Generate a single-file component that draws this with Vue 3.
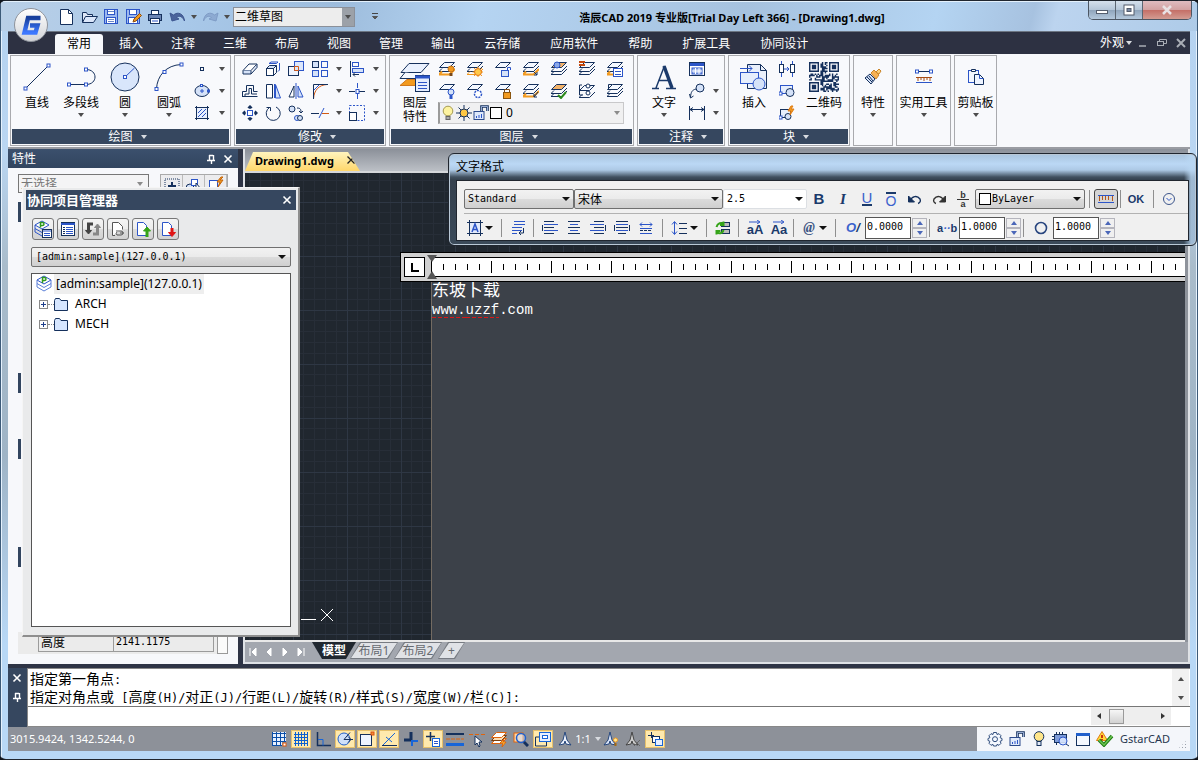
<script setup>
import { h } from 'vue'

const N = '#15305c'
const B = '#2c55c8'
const L = '#d5e2f8'
const O = '#f29a1f'

const p = (d, s = N, f = 'none', w = 1) => `<path d="${d}" stroke="${s}" fill="${f}" stroke-width="${w}"/>`
const r = (x, y, w, hh, s = N, f = 'none') => `<rect x="${x}" y="${y}" width="${w}" height="${hh}" stroke="${s}" fill="${f}"/>`
const c = (x, y, rad, s = N, f = 'none', w = 1) => `<circle cx="${x}" cy="${y}" r="${rad}" stroke="${s}" fill="${f}" stroke-width="${w}"/>`
const sheet = (y, f = '#f4f8ff', x = 0) => p(`M${x + 5.5} ${y}h10l-5 5h-10z`, N, f)
const edge = (y, s = N, w = 1, x = 0) => p(`M${x + 3} ${y}l-3 3h10.5l5.5-5.5`, s, 'none', w)
const stack = (f, e2 = N, w2 = 1) => sheet(1.5, f) + edge(7.5) + edge(10.5, e2, w2)
const node = (x, y) => r(x - 1.5, y - 1.5, 3, 3, B, '#fff')
const hl = (x1, x2, ys, s = N) => ys.map((y) => p(`M${x1} ${y}H${x2}`, s)).join('')

const bits = []
for (let y = 0; y < 21; y++) {
  for (let x = 0; x < 21; x++) {
    const inF = (a, b) => x >= a && x < a + 7 && y >= b && y < b + 7
    const near = (x < 8 && y < 8) || (x > 12 && y < 8) || (x < 8 && y > 12)
    let on = false
    for (const [a, b] of [[0, 0], [14, 0], [0, 14]]) {
      if (inF(a, b)) {
        const m = Math.max(Math.abs(x - a - 3), Math.abs(y - b - 3))
        on = m !== 2
      }
    }
    if (!near) on = (x * x * 7 + y * 13 + x * y * 5 + ((x * y) % 7) * 3) % 9 < 5
    if (on) bits.push(`M${x} ${y}h1.02v1.02h-1.02z`)
  }
}

const ic = {
  logo: [36, 36, `<defs><linearGradient id="lg" x2="0" y2="1"><stop stop-color="#fff"/><stop offset="1" stop-color="#d2d4d8"/></linearGradient><linearGradient id="gg" x2="0" y2="1"><stop stop-color="#173f9c"/><stop offset="1" stop-color="#3d78ff"/></linearGradient></defs><circle cx="18" cy="18" r="16.5" fill="url(#lg)" stroke="#8d929b"/>` + p('M27.500 11H15L11.500 25.500h11l2-7H17', 'url(#gg)', 'none', 4.500)],
  new: [16, 16, p('M1.5.5h8l4 4v11h-12z', N, '#fff') + p('M9.500.5v4h4', N)],
  open: [17, 16, p('M1.500 13.500v-10h4l1 2h5v2', N, '#dfe8f7') + p('M1.500 13.500l3-6h12l-4 6z', N, '#dbe7fb')],
  save: [16, 16, r(1.5, 0.5, 13, 14, B, '#9db8ee') + r(4.5, 0.5, 7, 5, B, '#fff') + r(3.5, 8.500, 9, 6, B, '#fff') + hl(5, 11, [2.5, 10.5, 12.500], '#6b87c8')],
  saveas: [17, 16, r(1.5, 0.5, 13, 14, B, '#9db8ee') + r(4.5, 0.5, 7, 5, B, '#fff') + r(3.5, 8.500, 9, 6, B, '#fff') + p('M8 13l1-3 5.500-5.500 2 2L11 12z', '#8b4d13', O)],
  print: [16, 16, r(4.5, 1.5, 7, 4, N, '#fff') + r(1.5, 5.5, 13, 6, N, '#6c86b4') + r(3.5, 9.5, 9, 5, N, '#fff') + hl(5, 11, [12], B)],
  undo: [17, 14, p('M1 3l2 8 7-2-2.500-1.500c3-2.500 6-1 8 3.500C15 4 9 1 4.500 5z', '#3d5690', '#4a639c')],
  redo: [17, 14, p('M16 3l-2 8-7-2 2.500-1.500c-3-2.500-6-1-8 3.500C2 4 8 1 12.500 5z', '#7f9cc6', '#8daad2')],
  line: [30, 30, p('M3.5 26.500L26.500 3.500') + node(3.5, 26.500) + node(26.500, 3.500)],
  pline: [32, 30, p('M4 22.500h17c12 0 12-15 0-15', N) + node(4, 22.500) + node(21, 22.500) + node(21, 7.500)],
  circle: [30, 30, c(15, 15, 14, N, '#d9e6fb') + p('M15 15L24.500 6', B) + node(15, 15)],
  arc: [30, 30, p('M2.500 27C3 14 12 3 27.500 2.500') + node(2.500, 27) + node(10.500, 10) + node(27.500, 2.500)],
  point: [16, 16, r(6.5, 6.5, 3, 3)],
  ellipse: [16, 16, `<ellipse cx="8" cy="8" rx="7" ry="5.500" stroke="${N}" fill="${L}"/>` + p('M8 6v4M6 8h4', B) + r(6.500, 1.500, 2, 2, B, '#fff') + r(13.500, 7, 2, 2, B, '#fff')],
  hatch: [16, 16, r(2.5, 2.500, 11, 11, N, '#e9f0fd') + p('M2.500 1v14M13.500 1v14M1 2.500h14M1 13.500h14') + p('M4 8l4-4M4 12l8-8M8 12l4-4', B)],
  erase: [16, 16, p('M1 9.500L7 3h8l-6 6.500z', N, '#fff') + p('M1 9.500V13h8V9.500M9 13l6-6.500V3', N, L)],
  copy3: [16, 16, r(1.500, 7.500, 7, 7, N, '#fff') + p('M1.500 7.500l3-3h7l-3 3z', N, L) + p('M8.500 14.500l3-3v-7', N) + p('M4 2.500l2-1.500h7l-1.500 1.500zM14.500 2v7l-1.500 1.500', B)],
  offs: [16, 16, r(0.5, 5.500, 10, 9, N, '#eef3fd') + r(6.500, 0.5, 9, 9, B, '#dbe6fc') + p('M6.500 9.500v-4h4v4z', '#d25a14')],
  array: [16, 16, r(0.5, 0.5, 6, 6, N, L) + r(9.5, 0.5, 6, 6, B) + r(0.5, 9.5, 6, 6, B, L) + r(9.5, 9.5, 6, 6, B)],
  align: [16, 16, p('M1.500 0v16') + r(3.500, 1.500, 6, 4, B) + r(3.500, 7.500, 11, 4, B, L) + p('M10 13.500H4m2-2l-2 2 2 2')],
  outset: [16, 16, p('M.5 13.500v-5h4v-6h7v6h4M3 13.500v-2.500h4V5.500h2.500V11H15M0 13.500h15.500')],
  mirror: [16, 16, p('M1.500 15V1.500h6V15z', N, '#fff') + p('M9.500 1v14', B) + p('M10.500 1.500L15.500 15h-5z', B, L)],
  mirror2: [16, 16, p('M6 3v11H1z', N, '#fff') + p('M8 0v16', B, 'none', 1) + p('M10 3v11h5z', B, L)],
  fillet: [16, 16, p('M1.500 16C2 7 7 2 15 1.500', '#d25a14') + p('M1.500 16V1.500H16', N) + p('M2 7l5-5', B)],
  brk: [16, 16, p('M0 8.500h6m4 0h6') + p('M8.500 0v5m0 6v5', B) + r(7, 6.500, 3, 4, B, '#fff')],
  move: [16, 16, r(5.500, 5.500, 5, 5, B, '#fff') + p('M8 4V1m-2 2l2-2 2 2M8 12v3m-2-2l2 2 2-2M4 8H1m2-2L1 8l2 2M12 8h3m-2-2l2 2-2 2', N, 'none', 1.5)],
  rotate: [16, 16, p('M4.500 2.500A7 7 0 1 0 11 2', N) + p('M1.500 2.500h4V6', N)],
  scalec: [16, 16, c(4, 4, 3, N, L) + c(9, 13, 2.500, B, L) + c(12, 13, 2.500, N, L) + p('M9 3c4 0 4 2 4 5m-2-2l2 2 2-2')],
  trim: [18, 16, p('M0 8.500h8') + p('M8 13l5-10', B) + p('M11 8.500h7', '#d25a14')],
  stretch: [16, 16, `<rect x=".5" y=".5" width="15" height="15" stroke="${B}" stroke-dasharray="2 1.500"/>` + r(0.5, 7.500, 7, 8, N, '#fff')],
  layers: [32, 32, p('M10 2.500h20l-8 9H2z', N, '#eaf1fe') + p('M6 11.500l-5 6h20l3-4', N, '#f4f8ff') + p('M8 18.500l-7 6h19v-6z', '#d2781c', O) + r(16.500, 14.500, 14, 16, N, '#e4edff') + p('M16 16h15', B, 'none', 3) + hl(19, 28, [21.500, 24.500, 27.500], B)],
  l1: [16, 16, stack('#f4f8ff', O, 2) + c(12, 8, 3, '#c2711a', O) + p('M12 12v3', '#7a4a1a', 'none', 3)],
  l2: [16, 16, stack('#f4f8ff', O) + c(11, 11, 3.500, '#e07010', '#ffc94a') + p('M11 5.500v2m0 7v1.500M5.500 11h2m7 0h1.500M7 7l1 1m6 6l1 1m0-8l-1 1m-6 6l-1 1', O)],
  l3: [16, 16, sheet(1.5) + p('M12.500 9V6.500h3V9', B) + r(6.500, 9.500, 7, 6, B, L)],
  l4: [16, 16, stack('#f4f8ff', O, 2) + p('M10 10l4 4m0-3v3h-3')],
  l5: [16, 16, stack('#f3b36a') + c(6, 4, 3, B, '#8ba8e6')],
  l6: [16, 16, stack('#f4f8ff') + p('M0 1h6M0 4h6', '#c4480c', 'none', 2)],
  l7: [16, 16, stack('#f4f8ff', O, 2) + r(6.500, 7.500, 9, 8, B, '#fff') + hl(8, 14, [10.500, 13.500], B)],
  l8: [16, 16, sheet(1.5) + c(12, 9, 3, B, L) + p('M12 12v4', B, 'none', 3)],
  l9: [16, 16, sheet(1.5) + `<circle cx="11" cy="11" r="3.500" stroke="${B}" fill="#fff" stroke-width="1.500" stroke-dasharray="2 1"/>`],
  l10: [16, 16, sheet(1.5) + p('M9.500 10V6.500h5V10', '#7a4a1a') + r(8.500, 9.500, 7, 6, '#8a5510', O)],
  l11: [16, 16, stack('#f4f8ff', O, 2) + p('M15 9l-4 5m0-3v3h3')],
  l12: [16, 16, stack('#f3b36a') + p('M7 12l3 3 5-6', '#2c8a1c', 'none', 2)],
  l13: [16, 16, sheet(2.5) + edge(11.500) + c(9, 3, 2, N, '#fff') + c(9, 10, 2, N, '#fff') + p('M3 2H.5v10H4')],
  l14: [16, 16, stack('#f4f8ff') + p('M5 1.500H1.500V5')],
  bulb: [14, 16, c(7, 6, 4.800, '#a59a51', '#fdf3a0') + r(5, 11.500, 4, 3, '#666', '#aaa')],
  sun: [16, 16, p('M8 0v16M0 8h16M2.500 2.500l11 11m0-11l-11 11') + c(8, 8, 4, N, '#ffc845')],
  lock: [16, 16, p('M8.500 7V1.500h6V6', N, 'none', 2.600) + p('M8.500 7V1.500h6V6', '#b9cdf2', 'none', 0.8) + r(1, 6.500, 10, 8, '#2c4a8c', '#dfe9fb') + p('M3.500 11v2m2.500-3v3m2.500-4v4', B)],
  bigA: [26, 26, p('M1 24.500h7M15 24.500h10M5 24L13 3l8 21M8 16.500h10', '#1b3a6b', 'none', 1.500) + p('M13 2l8 22', '#1b3a6b', 'none', 3.500)],
  table: [16, 14, r(0.5, 0.5, 15, 13, N, '#fff') + p('M1 2.500h14', B, 'none', 3) + r(3, 6, 10, 6, B, '#aabff0') + p('M3 9h10M6.500 6v6M10 6v6', '#fff')],
  leader: [16, 16, c(11, 5, 4, N, L) + p('M7 6C3 7 2 9 1.500 14m-1-3l1 4 3-2')],
  dim: [16, 16, p('M.5 1v14M15.500 1v14M1 4.500h14M4 2.500l-3 2 3 2M12 2.500l3 2-3 2')],
  insert: [30, 30, p('M8.500 10V2.500h13l6 6v18H8.500V20', N, '#eaf0fb') + p('M21.500 2.500v6h6') + r(1.500, 10.500, 18, 11, B, '#e6eefc') + c(20, 22, 6, B, L) + p('M1 6.500h12m-3-3l3 3-3 3', B)],
  b1: [16, 16, p('M2.500 0v16M13.500 0v16', B) + r(0.5, 3.500, 4, 8, N, '#fff') + r(11.500, 3.500, 4, 8, N, '#fff') + p('M5 8h5m-2-2l2 2-2 2', B)],
  b2: [16, 16, r(1.500, 2.500, 12, 8, B, '#e6eefc') + c(11, 9.500, 4, N, L) + node(1.500, 10.500)],
  b3: [16, 16, r(1.500, 4.500, 10, 8, N, '#e6eefc') + c(9, 11.500, 3, N, L) + node(1.500, 12.500) + p('M12 1l-3 5h3l-1 4 4-6h-3l2-3z', '#e07c12', O)],
  qr: [21, 21, `<path d="${bits.join('')}" fill="${N}" stroke="none"/>`],
  brush: [18, 18, p('M1 10l5-4 5 5-4 5z', N, L) + p('M3 9l5 5M5 8l4 5', N) + p('M7 5l3-3 5 5-3 4z', '#c9852a', '#f7b254') + p('M12 4l3-3 2 2-2 3z', '#c9852a', '#ffd27a')],
  util: [18, 16, p('M3 2.500h12', N) + node(2, 2.500) + node(16, 2.500) + p('M1 8.500h16', '#a84c12') + p('M3 8v4m3-4v3m3-3v4m3-4v3m3-3v4', '#a84c12') + p('M1 13.500h16', B)],
  paste: [16, 18, r(0.5, 2.500, 10, 12, B, '#f3f7ff') + p('M3.500 3.500v-2h4v2z', N, '#fff') + p('M6.500 6.500h5l4 4v6h-9z', N, '#eef4ff') + p('M11.500 6.500v4h4', B)],
  pin: [10, 10, p('M3.500 1v5m4-5v5M3 1.500h4M1 6.500h8M5.500 7v3', '#fff', 'none', 1.4)],
  x: [10, 10, p('M1.500 1.500l7 7m0-7l-7 7', '#fff', 'none', 1.6)],
  xd: [10, 10, p('M1.500 1.500l7 7m0-7l-7 7', '#222', 'none', 1.300)],
  q1: [16, 16, `<rect x="1" y="3" width="14" height="12" stroke="${N}" stroke-dasharray="1 1"/>` + p('M8 6v8M4 10h8', N, 'none', 2)],
  q2: [16, 16, c(4, 12, 4, N, L) + r(5.500, 3.500, 6, 6, B, '#fff') + p('M10 7v8l2-2 3 0z', N, '#fff')],
  q3: [16, 16, r(1.500, 4.500, 8, 9, B, '#fff') + p('M13 1l-4 5h3l-2 5 5-7h-3l3-3z', '#c4660d', O)],
  proj: [18, 18, p('M9 1l7 4-7 4-7-4z', B, '#fff') + p('M2 5v7l7 4 7-4V5M2 8.500l7 4 7-4', '#5b7fd8') + p('M7.500 8V2.500h2a1 1 0 0 1 0 3h-2', '#2f9a1c', 'none', 1.500)],
  proj2: [18, 18, p('M8 1l7 4-7 4-7-4z', B, '#fff') + p('M1 5v7l7 4M1 8.500l7 4', B) + p('M6.500 7.500V2.500h2a1 1 0 0 1 0 3h-2', '#2f9a1c', 'none', 1.500) + r(8.500, 9.500, 9, 8, N, '#fff') + p('M9 11h8M10 13.500h6M10 15.500h6', B)],
  list: [16, 16, r(1.500, 1.500, 13, 13, N, '#fff') + p('M1 3h14', B, 'none', 2) + hl(3, 5, [6.500, 8.500, 10.500, 12.500]) + hl(6, 13, [6.500, 8.500, 10.500, 12.500], B)],
  swap: [18, 16, p('M9 3H4.500v8', '#444', 'none', 3) + p('M1.500 9.500h6L4.500 13z', '#444', '#444') + p('M9 13h4.500V6', '#888', 'none', 3) + p('M10.500 6.500h6L13.500 3z', '#888', '#888')],
  docl: [16, 16, p('M2.500 14.500V1.500h6l4 4v3', '#555', '#fff') + p('M5 14.500H2.500M6 10h5a2 2 0 0 1 0 4H7a2 2 0 0 1 0-3m3 1h4', '#555')],
  docu: [16, 16, p('M2.500 1.500h6l3 3v10h-9z', B, '#fff') + p('M12 16V9', '#35a418', 'none', 3) + p('M8.500 10h7L12 6z', '#35a418', '#35a418')],
  docd: [16, 16, p('M2.500 1.500h6l3 3v10h-9z', B, '#fff') + p('M12 7v5', '#e01515', 'none', 3) + p('M8.500 11.500h7L12 15.500z', '#e01515', '#e01515')],
  folder: [14, 13, p('M.5 12.500v-10l1-2h4l1.500 2h6.500v10z', N, '#d6e6ff')],
  ucsx: [14, 14, p('M1 1l12 12M13 1L1 13', '#fff')],
  fA: [16, 16, r(2.500, 2.500, 11, 11, B, '#e2eafb') + p('M2.500 0v16M13.500 0v16M0 2.500h16M0 13.500h16') + p('M5 12l3-8 3 8M6 9.500h4', B, 'none', 1.5)],
  fP: [14, 16, hl(3, 14, [1.500, 4.500], B) + hl(1, 11, [7.500, 10.500], B) + hl(1, 6, [13.500], B) + p('M12.500 8v5H8m2-2l-2 2 2 2', N)],
  fL: [16, 16, p('M.5 5v6', N) + hl(2, 12, [1.500, 7.500]) + hl(2, 16, [4.500, 10.500], B) + hl(2, 12, [13.500])],
  fC: [14, 16, hl(1, 13, [1.500, 7.500, 13.500]) + hl(3, 11, [4.500, 10.500], B)],
  fR: [16, 16, p('M15.500 5v6', N) + hl(4, 14, [1.500, 7.500]) + hl(0, 14, [4.500, 10.500], B) + hl(4, 14, [13.500])],
  fJ: [16, 16, p('M.5 5v6M15.500 5v6', N) + hl(2, 14, [1.500, 7.500]) + hl(2, 14, [4.500, 10.500], B) + hl(4, 12, [13.500])],
  fD: [14, 16, p('M1 4.500h12M3 2.500l-2 2 2 2m8-4l2 2-2 2', B) + `<path d="M1 10.500h12" stroke="${N}" stroke-dasharray="3 1"/>` + hl(1, 13, [8.500, 13.500], B)],
  fS: [16, 16, p('M3.500 2v12M1 4.500l2.500-3L6 4.500m-5 7l2.500 3L6 11.500', B) + hl(8, 16, [3.500, 8.500, 13.500])],
  fF: [16, 16, r(6.500, 2.500, 8, 4, N, '#bbb') + r(6.500, 9.500, 8, 4, N, '#bbb') + p('M1.500 7c1-4 5-5 7-3m0-2.500v3.500H5M8.500 10c-1 4-5 4-7 2m0 2.500v-3.500h4', '#35a418', 'none', 2)],
  arrR: [12, 4, p('M0 2h10M8 0l3 2-3 2', B)],
  fU: [14, 14, p('M2 9c2-5 7-6 10-2 1 2 0 4-2 4.500', N, 'none', 1.400) + p('M.5 4v6h6z', N, N)],
  fX: [14, 14, p('M12 9C10 4 5 3 2 7c-1 2 0 4 2 4.500', '#333', 'none', 1.400) + p('M13.500 4v6h-6z', '#333', '#333')],
  ruler: [16, 10, p('M0 1.500h16', B) + p('M1.500 2v5m3-5v4m3-4v4m3-4v4m4-4v5', '#b4561a') + p('M0 8.500h16', B)],
  more: [14, 14, c(7, 7, 5.500, '#3c558b') + p('M4.500 6l2.500 2.500L9.500 6', B)],
  ring: [14, 14, c(7, 7, 5.500, '#29467f', 'none', 1.600)],
  s1: [16, 16, p('M1 1h14v10h-4v4H1z', 'none', '#e8f1ff') + p('M1.500 1v14M5.500 1v14M9.500 1v14M13.500 1v10M1 2.500h14M1 6.500h14M1 10.500h14M1 14.500h10', '#0b4ea8') + r(12, 12, 3, 3, '#e0590c', '#fff')],
  s2: [16, 16, p('M2.500 1v14M5.500 1v14M8.500 1v14M11.500 1v14M14.500 1v14M1 3.500h14M1 6.500h14M1 9.500h14M1 12.500h14', '#0b5fd0')],
  s3: [16, 16, p('M2.500 1v13.500H16', N, 'none', 1.500) + p('M3 8.500h5v6', '#1765d8')],
  s4: [16, 16, c(7, 8, 6, '#2160cc', '#cfe0fa') + p('M7 8.500h9M7 8.500l6-7m-2 4l3 3-3 3')],
  s5: [16, 16, r(1.500, 3.500, 11, 11, N, '#eef4ff') + r(12, 1, 3, 3, '#d8500c', '#f58a3a')],
  s6: [16, 16, p('M1 14.500h15', N) + p('M2 14L14 2', '#1765d8') + p('M5 6l6 5', '#1765d8')],
  s7: [16, 16, p('M8 1v8H1', N, 'none', 3) + p('M9 10h6M9 9v6', '#1765d8', 'none', 2)],
  s8: [16, 16, p('M1 5.500h9M5.500 1v9', N, 'none', 1.500) + r(7.500, 7.500, 7, 8, '#1765d8', '#fff') + hl(9, 13, [10.500, 12.500], B)],
  s9: [18, 16, p('M0 3h18', N, 'none', 2) + '<path d="M0 8h18" stroke="#e0640c" stroke-dasharray="4 1"/>' + p('M0 13.500h18', '#1765d8', 'none', 3)],
  s10: [16, 16, '<path d="M0 3.500h16" stroke="#e0640c" stroke-dasharray="4 2"/>' + p('M6 5v9l2-2 2 4 1-1-1-4h3z', N, '#fff')],
  s11: [16, 16, p('M5.500 7.500h10l-5 5h-10z', '#e0640c', '#fff') + p('M5.500 4.500h10l-5 5h-10z', '#7a3f10', '#ffdcb0') + p('M5.500 1.500h10l-5 5h-10z', '#e0640c', '#fff') + p('M13 8l-4 4h3l-1 4 4-5h-3z', '#e0640c', '#ffd23f')],
  s12: [16, 16, r(1, 2, 9, 9, '#e0640c', '#ffd5a5') + c(8, 7, 4.500, '#2160cc', '#cfe0fa88', 1.500) + p('M11 11l4 4', N, 'none', 3)],
  s13: [18, 16, r(5.500, 1.500, 11, 9, '#1765d8', '#e6f0ff') + r(8.500, 4.500, 5, 3, '#1765d8', '#fff') + p('M5 6H1.500v9h11v-4', N)],
  s14: [14, 16, p('M7 1L5 9l-4 5 5-1 1-3 1 3 5 1-4-5z', '#26477d', '#f0f5ff')],
  s15: [16, 16, p('M7 1L5 9l-4 5 5-1 1-3 1 3 5 1-4-5z', '#26477d', '#dbe6fa') + c(12.500, 9, 2, O, '#ffeb9a') + p('M12.500 12v3', '#a86a10', 'none', 2)],
  s16: [16, 16, p('M7 1L5 9l-4 5 5-1 1-3 1 3 5 1-4-5z', '#444', '#ccc') + p('M9 9l6 6m0-6l-6 6', '#666')],
  s17: [16, 16, p('M1 4.500h6M4.500 1v6', N) + r(5.500, 5.500, 7, 6, N, '#fff') + r(8.500, 8.500, 7, 6, '#1765d8', '#e6f0ff')],
  gear: [16, 16, p('M6.500 1.500h3l.5 2 2-.8 2 2-.9 2 1.900.8v2l-1.900.8.9 2-2 2-2-.9-.5 1.600h-3l-.5-1.600-2 .9-2-2 .9-2-1.900-.8v-2l1.900-.8-.9-2 2-2 2 .8z', '#2f4c7c', '#f4f8ff') + c(8, 8.200, 2.500, '#2f4c7c')],
  bulb2: [14, 16, c(7, 5.500, 4.800, N, '#ffe68a') + r(5, 10.500, 4, 4, N, '#dfe8f7')],
  chip: [18, 16, r(2.500, 3.500, 12, 8, N, '#7e9bd8') + p('M4.500 1v2m3-2v2m3-2v2M4.500 12v2M0 5.500h2M0 8.500h2', N) + c(11, 10, 4, B, '#dbe8ffdd') + p('M14 13l3 2', N)],
  win: [16, 16, r(1.500, 2.500, 13, 12, N, '#f4f8ff') + p('M1 3.500h14', '#2160cc', 'none', 3)],
  warn: [18, 16, p('M6 .5l5.500 9H.5z', '#e07c12', '#ffd83a') + p('M6 4v3m0 1v1', '#b00', 'none', 1.500) + p('M3 9l5 5 8-9', '#1f7d14', 'none', 3.500) + p('M3 9l5 5 8-9', '#6dc552', 'none', 1.500)],
  gm: [12, 12, r(0.5, 6.500, 11, 3, '#555e6e', '#fff')],
  gx: [12, 10, p('M2 1l8 8m0-8l-8 8', '#e9e1e3', 'none', 2.500)],
  gr: [12, 12, r(1, 1, 10, 10, '#525b6b', '#fff') + r(4, 4.500, 4, 3, '#525b6b', '#7a8aa6')],
  m1: [10, 10, p('M1 8h7', '#a9adb5', 'none', 1.500)],
  m2: [10, 10, r(0.5, 3.500, 6, 4, '#a9adb5') + p('M2.500 3V1.500h7v4H7', '#a9adb5')],
  m3: [10, 10, p('M1 1l8 8m0-8L1 9', '#a9adb5', 'none', 2)],
  cus: [10, 8, p('M2 .5h6', '#444') + p('M2.500 3.500h5L5 6z', '#555', '#555')],
  nf: [8, 8, p('M1 0v8', '#fff') + p('M7 0L3 4l4 4z', '#fff', '#fff')],
  np: [8, 8, p('M6 0L2 4l4 4z', '#fff', '#fff')],
  nn: [8, 8, p('M2 0l4 4-4 4z', '#fff', '#fff')],
  nl: [8, 8, p('M7 0v8', '#fff') + p('M1 0l4 4-4 4z', '#fff', '#fff')],
}

const Icon = (props) => {
  const [w, hh, inner] = ic[props.n]
  return h('svg', { width: props.w || w, height: props.w || hh, viewBox: `0 0 ${w} ${hh}`, fill: 'none', 'aria-hidden': 'true', style: { display: 'block', flex: 'none' }, innerHTML: inner })
}
Icon.props = ['n', 'w']

const quick = [['new', '新建'], ['open', '打开'], ['save', '保存'], ['saveas', '另存为'], ['print', '打印']]
const menus = ['常用', '插入', '注释', '三维', '布局', '视图', '管理', '输出', '云存储', '应用软件', '帮助', '扩展工具', '协同设计']
const draw = [['line', '直线', false], ['pline', '多段线', true], ['circle', '圆', true], ['arc', '圆弧', true]]
const modify = ['erase', 'copy3', 'offs', 'array', 0, 'align', 0, 'outset', 'mirror', 'mirror2', 'fillet', 0, 'brk', 0, 'move', 'rotate', 'scalec', 'trim', 0, 'stretch', 0]
const layerIcons = Array.from({ length: 14 }, (_, i) => 'l' + (i + 1))
const singles = [['brush', '特性', 'w40'], ['util', '实用工具', 'w55'], ['paste', '剪贴板', 'w43']]
const toolsPM = ['proj2', 'list', 'swap', 'docl', 'docu', 'docd']
const status = [['s1', 0], ['s2', 1], ['s3', 0], ['s4', 1], ['s5', 1], ['s6', 1], ['s7', 0], ['s8', 1], ['s9', 0], ['s10', 0], ['s11', 0], ['s12', 0], ['s13', 1], ['s14', 0]]
const tray = ['gear', 'lock', 'bulb2', 'chip', 'win', 'warn']
const spins = [['倾斜角度', '0.0000'], ['追踪', '1.0000'], ['宽度因子', '1.0000']]
const log = ['指定第一角点:', '指定对角点或 [高度(H)/对正(J)/行距(L)/旋转(R)/样式(S)/宽度(W)/栏(C)]:']
const runs = (t) => t.match(/[\x20-\x7e]+|[^\x20-\x7e]+/g).map((s) => ({ s, latin: /^[\x20-\x7e]/.test(s) }))
</script>

<template>
  <div class="app">
    <header class="title">
      <button class="logo" aria-label="应用菜单"><Icon n="logo" /></button>
      <div class="quick">
        <button v-for="q in quick" :key="q[0]" :aria-label="q[1]"><Icon :n="q[0]" /></button>
        <button aria-label="撤销"><Icon n="undo" /></button>
        <button class="dd" aria-label="撤销列表"><i class="tri"></i></button>
        <button aria-label="重做"><Icon n="redo" /></button>
        <button class="dd" aria-label="重做列表"><i class="tri"></i></button>
        <label class="space"><select aria-label="工作空间"><option>二维草图</option></select><span><i class="tri"></i></span></label>
        <button class="cus" aria-label="自定义"><Icon n="cus" /></button>
      </div>
      <h1>浩辰CAD 2019 专业版[Trial Day Left 366] - [Drawing1.dwg]</h1>
      <div class="winbtns">
        <button aria-label="最小化"><Icon n="gm" /></button>
        <button aria-label="还原"><Icon n="gr" /></button>
        <button class="close" aria-label="关闭"><Icon n="gx" /></button>
      </div>
    </header>

    <div class="client">
      <nav class="menu">
        <button v-for="(m, i) in menus" :key="m" :class="{ on: i === 0 }">{{ m }}</button>
        <div class="mdi">
          <button>外观<i class="tri lt"></i></button>
          <button v-for="m in ['m1', 'm2', 'm3']" :key="m" :aria-label="m"><Icon :n="m" /></button>
        </div>
      </nav>

      <section class="ribbon">
        <div class="panel w221">
          <div class="body">
            <button v-for="d in draw" :key="d[0]" class="big"><span class="pic"><Icon :n="d[0]" /></span>{{ d[1] }}<i v-if="d[2]" class="tri"></i></button>
            <div class="small pair">
              <template v-for="s in ['point', 'ellipse', 'hatch']" :key="s">
                <button :aria-label="s"><Icon :n="s" /></button><button aria-label="更多"><i class="tri"></i></button>
              </template>
            </div>
          </div>
          <footer>绘图<i class="tri lt"></i></footer>
        </div>
        <div class="panel w153">
          <div class="body">
            <div class="small mod">
              <button v-for="(s, i) in modify" :key="i" :aria-label="s || '更多'"><Icon v-if="s" :n="s" /><i v-else class="tri"></i></button>
            </div>
          </div>
          <footer>修改<i class="tri lt"></i></footer>
        </div>
        <div class="panel w245">
          <div class="body">
            <button class="big two"><span class="pic"><Icon n="layers" /></span><span class="wrap">图层 特性</span></button>
            <div class="layer">
              <div class="small lay">
                <button v-for="s in layerIcons" :key="s" :aria-label="s"><Icon :n="s" /></button>
              </div>
              <button class="laycombo">
                <Icon n="bulb" /><Icon n="sun" /><Icon n="lock" /><i class="sq"></i><span>0</span><i class="tri g"></i>
              </button>
            </div>
          </div>
          <footer>图层<i class="tri lt"></i></footer>
        </div>
        <div class="panel w88">
          <div class="body">
            <button class="big"><span class="pic"><Icon n="bigA" /></span>文字<i class="tri"></i></button>
            <div class="small ann">
              <button aria-label="表格"><Icon n="table" /></button><span></span>
              <button aria-label="引线"><Icon n="leader" /></button><button aria-label="更多"><i class="tri"></i></button>
              <button aria-label="标注"><Icon n="dim" /></button><button aria-label="更多"><i class="tri"></i></button>
            </div>
          </div>
          <footer>注释<i class="tri lt"></i></footer>
        </div>
        <div class="panel w122">
          <div class="body">
            <button class="big"><span class="pic"><Icon n="insert" /></span>插入</button>
            <div class="small one">
              <button v-for="s in ['b1', 'b2', 'b3']" :key="s" :aria-label="s"><Icon :n="s" /></button>
            </div>
            <button class="big"><span class="pic"><Icon n="qr" :w="30" /></span>二维码<i class="tri"></i></button>
          </div>
          <footer>块<i class="tri lt"></i></footer>
        </div>
        <div v-for="s in singles" :key="s[0]" class="panel solo" :class="s[2]">
          <button class="big"><span class="pic"><Icon :n="s[0]" /></span>{{ s[1] }}<i class="tri"></i></button>
        </div>
      </section>

      <main class="work">
        <aside class="props">
          <header>特性<span></span><button aria-label="固定"><Icon n="pin" /></button><button aria-label="关闭特性"><Icon n="x" /></button></header>
          <div class="sel">
            <label><select aria-label="选择" disabled><option>无选择</option></select><i class="tri g"></i></label>
            <div><button v-for="q in ['q1', 'q2', 'q3']" :key="q" :aria-label="q"><Icon :n="q" /></button></div>
          </div>
          <div class="sections">
            <div class="sec a"></div><div class="sec b"></div><div class="sec c"></div><div class="sec d"></div>
          </div>
          <div class="tail">
            <table><tbody><tr><th>高度</th><td>2141.1175</td></tr></tbody></table>
            <span class="thumb"></span>
          </div>
        </aside>

        <section class="doc">
          <div class="doctabs">
            <div class="doctab">Drawing1.dwg<button aria-label="关闭图纸"><Icon n="xd" /></button></div>
          </div>
          <div class="canvas">
            <div class="ucs"><Icon n="ucsx" /></div>
            <div class="mtext">
              <div class="rulerbar"><span class="tabstop"></span><span class="ruler"></span><i class="mk top"></i><i class="mk bot"></i></div>
              <div class="edit"><p>东坡卜载</p><p class="lat"><u>www.</u><u class="second">uzzf</u>.com</p></div>
            </div>
          </div>
          <div class="layouts">
            <button v-for="n in ['nf', 'np', 'nn', 'nl']" :key="n" class="nav" :aria-label="n"><Icon :n="n" /></button>
            <button class="sheet on"><span>模型</span></button>
            <button class="sheet"><span>布局1</span></button>
            <button class="sheet"><span>布局2</span></button>
            <button class="sheet plus"><span>+</span></button>
          </div>
        </section>
      </main>

      <section class="cmd">
        <div class="grip"><button aria-label="关闭命令行"><Icon n="x" /></button><button aria-label="固定命令行"><Icon n="pin" /></button></div>
        <div class="cmdmain">
          <div class="log">
            <div><p v-for="t in log" :key="t"><span v-for="(u, i) in runs(t)" :key="i" :class="{ latin: u.latin }">{{ u.s }}</span></p></div>
            <div class="vs"><i class="tri up"></i><i class="tri"></i></div>
          </div>
          <div class="entry"><input aria-label="命令"><div class="hs"><i class="tri le"></i><b></b><i class="tri ri"></i></div></div>
        </div>
      </section>

      <footer class="status">
        <span class="coord">3015.9424, 1342.5244, 0</span>
        <div class="toggles">
          <button v-for="s in status" :key="s[0]" :class="{ on: s[1] }" :aria-label="s[0]"><Icon :n="s[0]" /></button>
          <button class="ratio">1:1<i class="tri lt"></i></button>
          <button aria-label="注释可见性"><Icon n="s15" /></button>
          <button aria-label="自动缩放"><Icon n="s16" /></button>
          <button class="on" aria-label="循环选择"><Icon n="s17" /></button>
        </div>
        <div class="tray">
          <button v-for="t in tray" :key="t" :aria-label="t"><Icon :n="t" /></button>
          <span>GstarCAD</span>
          <i class="size"></i>
        </div>
      </footer>
    </div>

    <section class="pm">
      <header>协同项目管理器<button aria-label="关闭协同项目管理器"><Icon n="x" /></button></header>
      <div class="pmtools"><button v-for="t in toolsPM" :key="t" :aria-label="t"><Icon :n="t" /></button></div>
      <label class="combo"><select aria-label="项目"><option>[admin:sample](127.0.0.1)</option></select><i class="tri k"></i></label>
      <ul class="tree">
        <li class="root"><Icon n="proj" /><span>[admin:sample](127.0.0.1)</span></li>
        <li v-for="f in ['ARCH', 'MECH']" :key="f" class="kid"><button aria-label="展开"></button><i class="dots"></i><Icon n="folder" /><span>{{ f }}</span></li>
      </ul>
    </section>

    <section class="fmt">
      <header>文字格式</header>
      <div class="fbody">
        <div class="row one">
          <label class="combo c110"><select aria-label="样式"><option>Standard</option></select><i class="tri k"></i></label>
          <label class="combo c148 zh"><select aria-label="字体"><option>宋体</option></select><i class="tri k"></i></label>
          <label class="combo flat c84"><select aria-label="字高"><option>2.5</option></select><i class="tri k"></i></label>
          <button class="t bold">B</button><button class="t ital">I</button><button class="t und"><span>U</span></button><button class="t ov"><span>O</span></button>
          <button aria-label="撤销编辑"><Icon n="fU" /></button><button aria-label="重做编辑"><Icon n="fX" /></button>
          <button class="frac" aria-label="堆叠"><span>b</span><span>a</span></button>
          <label class="combo c110 layer-c"><i class="sq"></i><select aria-label="颜色"><option>ByLayer</option></select><i class="tri k"></i></label>
          <hr><button class="rtog" aria-label="标尺"><Icon n="ruler" /></button><hr>
          <button class="ok">OK</button><hr>
          <button class="mo" aria-label="选项"><Icon n="more" /></button>
        </div>
        <div class="row two">
          <button class="n" aria-label="分栏"><Icon n="fA" /></button><i class="tri k"></i><hr>
          <button class="p" aria-label="段落"><Icon n="fP" /></button><hr>
          <button v-for="f in ['fL', 'fC', 'fR', 'fJ', 'fD']" :key="f" :aria-label="f"><Icon :n="f" /></button><hr>
          <button aria-label="行距"><Icon n="fS" /></button><i class="tri k"></i><hr>
          <button class="p" aria-label="字段"><Icon n="fF" /></button><hr>
          <button class="case"><Icon n="arrR" />aA</button><button class="case"><Icon n="arrR" />Aa</button><hr>
          <button class="at">@</button><i class="tri k"></i><hr>
          <template v-for="(s, i) in spins" :key="i">
            <label class="spin" :class="'g' + i">
              <span v-if="i === 0"><em>O</em>/</span><span v-else-if="i === 1">a<em>··</em>b</span><Icon v-else n="ring" />
              <input :value="s[1]" :aria-label="s[0]">
            </label>
            <span class="ud"><button aria-label="增加"><i class="tri up"></i></button><button aria-label="减少"><i class="tri"></i></button></span>
            <hr v-if="i < 2">
          </template>
        </div>
      </div>
    </section>
  </div>
</template>

<style>
html, body, #app { height: 100%; }
body { margin: 0; background: #10151c; }
</style>

<style scoped>
* { box-sizing: border-box; }
button, input, select { font: inherit; color: inherit; background: none; border: 0; padding: 0; margin: 0; border-radius: 0; }
button { display: flex; align-items: center; justify-content: center; }
select { appearance: none; width: 100%; outline: 0; opacity: 1; }
p, h1, ul { margin: 0; padding: 0; list-style: none; }
.app { position: relative; height: 100%; display: flex; flex-direction: column; padding: 0 8px 8px; overflow: hidden; border: 1px solid #20262f; border-width: 1px 0; border-radius: 6px;
  font: 12px/16px "Noto Sans", "Noto Sans CJK SC", sans-serif; color: #000;
  background: linear-gradient(90deg, #3c5a78 0 1px, #e6f2fd 1px 2px, transparent 2px calc(100% - 2px), #e6f2fd calc(100% - 2px) calc(100% - 1px), #3c5a78 calc(100% - 1px)),
    linear-gradient(#b4d2f0, #bad6f2 20%, #a9bccb 35%, #9fb4c6 60%, #b8d8f6 85%); }
.tri { display: block; flex: none; width: 0; height: 0; border: 3px solid transparent; border-top: 4px solid #4d4d4d; border-bottom: 0; }
.tri.lt { border-top-color: #d8dbe0; }
.tri.g { border-top-color: #8b8b8b; }
.tri.k { border-width: 4px; border-bottom: 0; border-top-color: #111; }
.tri.up { border-top: 0; border-bottom: 4px solid #4d4d4d; }
.tri.le { border: 3px solid transparent; border-right: 4px solid #333; border-left: 0; }
.tri.ri { border: 3px solid transparent; border-left: 4px solid #333; border-right: 0; }
.sq { display: block; flex: none; width: 12px; height: 12px; border: 1px solid #000; background: #fff; }

.title { height: 30px; flex: none; display: flex; align-items: flex-start; margin: 0 -7px; padding: 0 0 0 55px;
  background: linear-gradient(105deg, #b9cfe6, #a9c9ea 15%, #9dbcdc 28%, #b5d4f2 40%, #a6c2df 62%, #b4d4f2 78%, #a7c2e0 86%, #bcd4ef 88%, #aecbe8 100%); box-shadow: inset 0 1px #e4f1fc; }
.logo { position: absolute; left: 13px; top: 6px; }
.quick { display: flex; align-items: center; height: 32px; width: 326px; flex: none; }
.quick button { width: 22px; height: 22px; flex: none; }
.quick .dd { width: 11px; }
.quick .cus { width: 14px; margin-left: 13px; }
.space { display: flex; width: 122px; height: 20px; flex: none; margin-left: 1px; background: #ededed; border: 1px solid #8b9099; font-size: 12px; padding-left: 1px; }
.space span { width: 12px; background: #9ca1a8; display: flex; align-items: center; justify-content: center; flex: none; }
.title h1 { flex: 1; text-align: center; font-size: 11px; font-weight: 700; line-height: 34px; white-space: nowrap; }
.winbtns { display: flex; width: 104px; height: 19px; flex: none; margin-right: 5px; margin-left: 6px; border: 1px solid #4c5663; border-top: 0; border-radius: 0 0 5px 5px; overflow: hidden; }
.winbtns button { width: 27px; flex: 1 1 27px; border-right: 1px solid #5c6672; background: linear-gradient(#d5e0ec, #b5c6d8 48%, #8fa4bb 50%, #b4c8dc); }
.winbtns .close { flex: 1 1 48px; border: 0; background: linear-gradient(#dfbcc0, #d3a2a2 48%, #c46e66 50%, #d39c92); }

.client { flex: 1; min-height: 0; display: flex; flex-direction: column; background: #2e3445; border-top: 1px solid #6d7683; }
.menu { height: 22px; flex: none; display: flex; align-items: flex-end; padding-left: 47px; color: #fff; background: #2d3142; }
.menu > button { height: 20px; padding: 0 14px; line-height: 18px; }
.menu > button:nth-child(n+9) { padding: 0 15px; }
.menu > button.on { background: #f7f8fb; color: #000; padding: 0 12px; margin-right: 2px; border-radius: 3px 3px 0 0; }
.mdi { margin-left: auto; display: flex; align-items: center; height: 22px; }
.mdi button { width: 19px; height: 20px; }
.mdi button:first-child { width: 34px; gap: 2px; }

.ribbon { flex: none; display: flex; gap: 3px; height: 95px; padding: 1px 2px; background: #f7f8fb; border-bottom: 2px solid #9a9ca2; }
.panel { flex: none; display: flex; flex-direction: column; border: 1px solid #a9aaae; padding: 1px; background: #f8f9fc; }
.w221 { width: 221px; } .w153 { width: 152px; } .w245 { width: 245px; } .w88 { width: 88px; } .w122 { width: 122px; } .w40 { width: 40px; } .w55 { width: 55px; } .w43 { width: 43px; }
.panel footer { height: 15px; flex: none; display: flex; gap: 8px; align-items: center; justify-content: center; background: #36475f; color: #fff; line-height: 15px; padding-left: 14px; }
.body { flex: 1; min-height: 0; display: flex; padding: 1px 0 0 3px; }
.big { width: 44px; height: 68px; flex: none; flex-direction: column; justify-content: flex-start; line-height: 14px; white-space: nowrap; }
.big .pic { height: 38px; display: flex; align-items: center; justify-content: center; flex: none; }
.big .tri { margin-top: 3px; }
.two { width: 42px; }
.wrap { width: 26px; white-space: normal; text-align: center; line-height: 14px; }
.small { display: grid; grid-auto-rows: 22px; align-content: start; }
.pair { grid-template-columns: 22px 18px; }
.mod { grid-template-columns: 22px 23px 24px 24px 14px 22px 16px; }
.lay { grid-template-columns: repeat(7, 28px); }
.ann { grid-template-columns: 22px 16px; }
.one.small { grid-template-columns: 22px; }
.lay button { justify-content: flex-start; padding-left: 3px; }
.laycombo { width: 186px; height: 22px; margin: 0 0 0 2px; background: #f0f0f1; border: 1px solid #c8c8ca; border-left: 2px solid #9b9b9b; gap: 1px; padding: 0 3px 0 1px; justify-content: flex-start; }
.laycombo span { margin-left: 3px; }
.laycombo .tri { margin-left: auto; }
.w122 .body { padding-left: 2px; }
.w122 .small + .big { width: 52px; }
.solo { padding-top: 2px; align-items: center; }

.work { flex: 1; min-height: 0; display: flex; gap: 5px; padding: 0 0 4px; }
.props { width: 230px; flex: none; display: flex; flex-direction: column; background: #f7f8fb; }
.props > header { height: 19px; flex: none; display: flex; align-items: center; color: #fff; background: linear-gradient(#3b506d, #32455f); padding: 0 2px 0 4px; }
.props header span { flex: 1; }
.props header button { width: 17px; height: 17px; }
.sel { display: flex; height: 23px; flex: none; padding: 6px 10px 0; justify-content: space-between; }
.sel label { display: flex; align-items: center; width: 131px; height: 19px; border: 1px solid #777; background: #f4f4f5; color: #777; padding: 0 5px 0 2px; }
.sel select { color: #777; }
.sel div { display: flex; height: 20px; border: 1px solid #aaa; }
.sel div button { width: 22px; border-right: 1px solid #bbb; background: #ececee; }
.sections { flex: 1; display: flex; flex-direction: column; margin-left: 10px; padding-top: 11px; }
.sec { border-left: 3px solid #32455f; height: 20px; flex: none; width: 40px; }
.sec.a { margin-bottom: 151px; } .sec.b { margin-bottom: 46px; } .sec.c { margin-bottom: 88px; }
.tail { display: flex; margin: 0 10px 10px; padding-left: 20px; background: #ebebeb; height: 22px; justify-content: space-between; }
.tail table { border-collapse: collapse; width: 176px; height: 20px; font: 10px/14px "DejaVu Sans Mono", monospace; }
.tail th { font: 12px/14px "Noto Sans CJK SC", sans-serif; width: 75px; text-align: left; }
.tail th, .tail td { border: 1px solid #9b9b9b; padding: 0 2px; }
.thumb { width: 11px; border: 1px solid #999; background: #fafafa; height: 22px; }

.doc { flex: 1; min-width: 0; display: flex; flex-direction: column; border: 1px solid #dfe2e6; border-width: 0 2px 2px; background: #8e939b; }
.doctabs { height: 22px; flex: none; background: linear-gradient(#8b9099, #bcc0c6); padding: 3px 0 0; }
.doctab { width: 115px; height: 19px; display: flex; align-items: center; padding-left: 10px; gap: 12px; font-weight: 700; font-size: 11px; line-height: 15px; padding-bottom: 3px; white-space: nowrap; background: linear-gradient(#fff4bd, #ffd76b); clip-path: polygon(8px 0, 103px 0, 100% 100%, 0 100%); }
.canvas { flex: 1; min-height: 0; position: relative; overflow: hidden; margin-right: 3px; border-top: 2px solid #d5d7da; border-bottom: 2px solid #e8e8e8; background-color: #20272f;
  background-image: linear-gradient(90deg, #2e3744 1px, transparent 1px), linear-gradient(#2e3744 1px, transparent 1px), linear-gradient(90deg, transparent 10px, #272e38 10px 11px, transparent 11px 21px, #272e38 21px 22px, transparent 22px 32px, #272e38 32px 33px, transparent 33px 43px, #272e38 43px 44px, transparent 44px), linear-gradient(transparent 10px, #272e38 10px 11px, transparent 11px 21px, #272e38 21px 22px, transparent 22px 32px, #272e38 32px 33px, transparent 33px 43px, #272e38 43px 44px, transparent 44px);
  background-size: 54px 54px; background-position: 48px 29px; }
.ucs { position: absolute; left: 56px; bottom: 18px; padding-left: 19px; }
.ucs::before { content: ""; position: absolute; left: 0; bottom: 2px; width: 15px; height: 1px; background: #fff; }
.mtext { position: absolute; left: 155px; top: 79px; right: 0; bottom: 0; display: flex; flex-direction: column; }
.rulerbar { position: relative; height: 30px; flex: none; display: flex; gap: 6px; padding: 4px 0 4px 3px; background: #d0d0d0; border: 1px solid #000; border-right: 0; }
.tabstop { width: 21px; height: 20px; border: 1px solid #000; background: #fff; display: flex; align-items: center; justify-content: center; }
.tabstop::after { content: ""; width: 6px; height: 7px; border-left: 2px solid #000; border-bottom: 2px solid #000; }
.ruler { flex: 1; height: 20px; border: 1px solid #000; border-right: 0; background: linear-gradient(90deg, #fff 59px, #000 59px) 0 3px / 60px 12px repeat-x, linear-gradient(90deg, #fff 11px, #000 11px) 0 6px / 12px 6px repeat-x, #fff; background-blend-mode: darken; }
.mk { position: absolute; left: 26px; border: 5px solid transparent; border-top: 7px solid #555; border-bottom: 0; top: 2px; }
.mk.bot { top: 18px; border-top: 0; border-bottom: 8px solid #555; }
.edit { flex: 1; margin-left: 31px; border-left: 1px solid #746b62; background: #3c4149; color: #fff; font-size: 17px; line-height: 15px; }
.edit .lat { font: 14px/26px "Liberation Mono", monospace; }
.edit u { text-decoration: none; background: repeating-linear-gradient(90deg, #d81818 0 4px, transparent 4px 6px) 0 100% / 100% 1px no-repeat; }
.layouts { height: 20px; flex: none; display: flex; background: #a3a7af; }
.nav { width: 16px; height: 20px; }
.sheet { width: 48px; height: 17px; margin-right: -4px; padding: 1px; background: #777b82; color: #666a70; clip-path: polygon(0 100%, 10px 0, 100% 0, calc(100% - 10px) 100%); }
.sheet span { display: flex; width: 100%; height: 15px; align-items: center; justify-content: center; background: #e0e2e6; clip-path: polygon(0 100%, 10px 0, 100% 0, calc(100% - 10px) 100%); }
.sheet.on { width: 44px; background: #20272f; color: #fff; font-weight: 700; margin-left: 3px; margin-right: -6px; clip-path: polygon(0 0, 100% 0, calc(100% - 10px) 100%, 10px 100%); }
.sheet.on span { background: none; clip-path: none; }
.sheet.plus { width: 27px; }

.cmd { flex: none; display: flex; height: 59px; background: #36475f; }
.grip { width: 18px; flex: none; display: flex; flex-direction: column; align-items: center; margin-right: 1px; }
.grip button { width: 18px; height: 18px; margin-top: 1px; }
.cmdmain { flex: 1; display: flex; flex-direction: column; background: #fff; border: 1px solid #888; border-right: 0; }
.log { height: 38px; display: flex; justify-content: space-between; border-bottom: 1px solid #777; font-size: 14px; line-height: 18px; padding-left: 2px; }
.log p { height: 18px; white-space: pre; font-family: "Noto Sans CJK SC", sans-serif; }
.latin { font: 12px/18px "DejaVu Sans Mono", monospace; }
.vs { width: 17px; background: #f1f1f1; display: flex; flex-direction: column; justify-content: space-between; align-items: center; padding: 8px 0 6px; margin-right: 1px; }
.entry { flex: 1; display: flex; }
.entry input { flex: 1; outline: 0; }
.hs { width: 80px; height: 18px; margin-right: 19px; background: #eee; display: flex; align-items: center; padding: 0 6px; }
.hs b { width: 15px; height: 15px; margin-left: 8px; border: 1px solid #9a9a9a; background: linear-gradient(#f6f6f6, #d2d2d2); }
.hs .ri { margin-left: auto; }

.status { flex: none; height: 24px; display: flex; align-items: center; background: #8d9199; color: #fff; font-size: 11px; }
.coord { width: 260px; flex: none; padding-left: 2px; white-space: nowrap; }
.toggles { display: flex; align-items: center; flex: 1; }
.toggles button { width: 20px; height: 18px; margin: 0 1px; flex: none; }
.toggles button.on { background: #ffe9ad; border: 1px solid #e5c06c; }
.toggles .ratio { width: 24px; gap: 4px; margin: 0; }
.tray { width: 213px; height: 24px; flex: none; display: flex; align-items: center; background: #f4f6fa; color: #26374f; padding-left: 7px; }
.tray button { width: 22px; height: 20px; flex: none; }
.tray span { margin-left: 4px; }
.size { width: 9px; height: 9px; margin: 11px 3px 0 auto; background: radial-gradient(#9aa0ab 1px, transparent 1px) 0 0 / 3px 3px; clip-path: polygon(100% 0, 100% 100%, 0 100%); }

.combo { display: flex; align-items: center; height: 20px; border: 1px solid #707070; border-radius: 2px; background: linear-gradient(#f2f2f2, #ebebeb 48%, #dcdcdc 50%, #cfcfcf); padding: 0 4px; font: 10px/16px "DejaVu Sans Mono", monospace; }
.combo.flat { background: #fff; border-color: #dcdfe3; }
.combo.zh { font: 12px/16px "Noto Sans CJK SC", sans-serif; }
.combo .tri { margin-left: auto; }

.pm { position: absolute; left: 22px; top: 186px; width: 278px; height: 450px; display: flex; flex-direction: column; background: #e9eaeb; border: 1px solid #f5f5f5; border-right: 2px solid #8e8e8e; border-bottom: 2px solid #8e8e8e; padding: 2px 3px 0 3px; }
.pm > header { height: 20px; flex: none; display: flex; align-items: center; justify-content: space-between; margin: 0 -1px 0 0; background: #36475f; color: #fff; font-weight: 700; font-size: 13px; padding: 0 0 0 1px; }
.pm > header button { width: 18px; height: 18px; }
.pmtools { display: flex; gap: 3px; padding: 8px 0 7px 6px; }
.pmtools button { width: 22px; height: 22px; border: 1px solid #777; border-radius: 3px; background: linear-gradient(#f4f4f4, #ececec 50%, #dcdcdc 50%, #d2d2d2); }
.pm .combo { margin: 0 4px 6px 5px; flex: none; }
.tree { flex: 1; margin: 0 4px 8px 5px; border: 1px solid #555; background: #fff; padding-left: 3px; }
.tree li { display: flex; align-items: center; height: 20px; }
.root span { background: #eee; padding: 2px; }
.root { gap: 1px; }
.kid span { margin-left: 7px; }
.dots { width: 6px; border-top: 1px dotted #888; }
.kid button { width: 9px; height: 9px; margin-left: 4px; border: 1px solid #8a8a8a; background: linear-gradient(#1f3f8c, #1f3f8c) center / 5px 1px no-repeat, linear-gradient(#1f3f8c, #1f3f8c) center / 1px 5px no-repeat, #fff; }

.fmt { position: absolute; left: 448px; top: 152px; right: 1px; height: 93px; display: flex; flex-direction: column; padding: 0 7px 6px; border: 1px solid #20262f; border-radius: 6px; box-shadow: inset 0 0 0 1px #b9c8d6; background: linear-gradient(90deg, transparent calc(100% - 12px), #b9d7f3cc calc(100% - 5px)), linear-gradient(#a8c3dd, #bbd8f5 10px, #adc9e5 16px, #41505f 23px, #34404d 26px, #3b4a59); }
.fmt > header { height: 26px; flex: none; line-height: 26px; }
.fbody { flex: 1; border: 1px solid #20262f; background: #f0f0f0; padding: 0 0 0 7px; display: flex; flex-direction: column; }
.row { display: flex; align-items: center; height: 33px; border-bottom: 1px solid #b2b2b2; flex: none; padding-top: 4px; }
.row.two { height: 26px; border: 0; padding: 2px 0 0; }
.row button { width: 24px; height: 22px; flex: none; color: #1b3a6b; }
.row hr { width: 1px; height: 18px; border: 0; background: #8f8f8f; margin: 0 4px; flex: none; }
.row .combo { flex: none; padding: 0 3px; height: 20px; }
.c110 { width: 110px; } .c148 { width: 149px; } .c84 { width: 84px; }
.layer-c .sq { margin-right: 1px; }
.row .t { font: 700 15px/18px "Liberation Sans", sans-serif; }
.row .ital { font: italic 700 15px/18px "Liberation Serif", serif; }
.row .und, .row .ov { color: #3b62cc; font-weight: 400; line-height: 12px; }
.row .ov { font-size: 14px; }
.und span { border-bottom: 2px solid #1b3a6b; }
.ov span { border-top: 2px solid #1b3a6b; padding-top: 1px; }
.row .frac { flex-direction: column; font: 700 9px/8px "Liberation Sans", sans-serif; color: #333; }
.frac span:first-child { border-bottom: 1px solid #333; width: 12px; }
.row .rtog { border: 1px solid #444; border-radius: 3px; background: #d5d5d5; height: 20px; }
.row .rtog + hr { margin: 0 2px; }
.row .ok { width: 26px; font: 700 11px/16px "Liberation Sans", sans-serif; }
.row.one .mo { width: 22px; }
.row.two .n { width: 22px; }
.row.two .p { width: 23px; }
.row.two .tri.k { margin-right: 4px; }
.row.two button:has(+ .tri) { margin-right: -1px; }
.row .case { flex-direction: column; font: 700 13px/12px "Liberation Sans", sans-serif; }
.case + hr { margin: 0 4px 0 2px; }
.row.two .at { width: 22px; font: italic 700 14px/18px "Liberation Serif", serif; color: #3c5583; }
.spin { display: flex; align-items: center; justify-content: space-between; width: 71px; flex: none; font: 700 11px/16px "Liberation Sans", sans-serif; color: #1b3a6b; padding-left: 6px; }
.spin.g1, .spin.g2 { width: 74px; }
.spin em { color: #3b62cc; }
.spin.g0 span { font-style: italic; font-size: 13px; }
.spin.g2 { padding-left: 9px; }
.spin input { width: 46px; height: 22px; flex: none; background: #fff; border: 1px solid #555; padding: 0 1px 4px; font: 10px/16px "DejaVu Sans Mono", monospace; color: #000; outline: 0; }
.ud { display: flex; flex-direction: column; margin-left: 1px; }
.row.two .ud button { width: 15px; height: 10px; border: 1px solid #b5b5bd; }
.ud .tri { border-top-color: #4a66b8; }
.ud .tri.up { border-bottom-color: #4a66b8; }
.ud + hr { margin: 0 1px 0 2px; }
</style>
